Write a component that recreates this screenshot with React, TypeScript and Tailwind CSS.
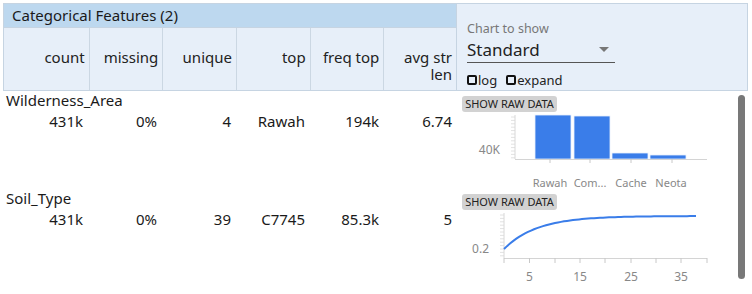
const columns = [
  { label: "count", width: "w-[85px]" },
  { label: "missing", width: "w-[74px]" },
  { label: "unique", width: "w-[74px]" },
  { label: "top", width: "w-[74px]" },
  { label: "freq top", width: "w-[74px]" },
  { label: "avg str len", width: "w-[73px]", wrap: true },
];

const rows = [
  { name: "Wilderness_Area", values: ["431k", "0%", "4", "Rawah", "194k", "6.74"] },
  { name: "Soil_Type", values: ["431k", "0%", "39", "C7745", "85.3k", "5"] },
];

const widths = ["w-[85px]", "w-[74px]", "w-[74px]", "w-[74px]", "w-[74px]", "w-[73px]"];

function RawButton() {
  return (
    <div className="ml-[5px] h-[16px] w-[95px] rounded-[3px] bg-[#d2d2d2] text-[11px] leading-[16px] text-[#222] text-center">
      SHOW RAW DATA
    </div>
  );
}

function YTicks({ x, from, to }: { x: number; from: number; to: number }) {
  const ticks = [];
  for (let y = from; y <= to; y += 3.4) ticks.push(y);
  return (
    <g stroke="#e2e2e2" strokeWidth="1">
      {ticks.map((y) => (
        <line key={y} x1={x - 4} x2={x} y1={y} y2={y} />
      ))}
    </g>
  );
}

function BarChart() {
  const bars = [
    { x: 78, top: 3, label: "Rawah", cx: 93 },
    { x: 117, top: 4, label: "Com...", cx: 133 },
    { x: 155, top: 41, label: "Cache", cx: 174 },
    { x: 193, top: 43, label: "Neota", cx: 214 },
  ];
  return (
    <svg width="280" height="80" viewBox="0 0 280 80">
      <YTicks x={58} from={5} to={46} />
      <line x1={58} x2={58} y1={3} y2={47} stroke="#d8d8d8" />
      {bars.map((b) => (
        <rect key={b.label} x={b.x} y={b.top} width={36} height={47 - b.top} fill="#3a7de9" stroke="#e9f1fd" strokeWidth="0.8" />
      ))}
      <line x1={58} x2={250} y1={47.5} y2={47.5} stroke="#d4d4d4" />
      {[93, 133, 174, 215].map((x) => (
        <line key={x} x1={x} x2={x} y1={47} y2={51} stroke="#c8c8c8" />
      ))}
      <g fontSize="11" fill="#888" textAnchor="middle" fontFamily="'Noto Sans', sans-serif">
        {bars.map((b) => (
          <text key={b.label} x={b.cx} y={75}>
            {b.label}
          </text>
        ))}
        <text x={43} y={42} textAnchor="end" fontSize="12">40K</text>
      </g>
    </svg>
  );
}

function LineChart() {
  const pts = [];
  for (let x = 47; x <= 240; x += 3) {
    const y = 6 + 33 * Math.exp(-(x - 47) / 33);
    pts.push(`${x},${y.toFixed(2)}`);
  }
  const ticks = [47, 72.5, 98, 123, 148, 174, 199, 224, 250];
  return (
    <svg width="280" height="80" viewBox="0 0 280 80">
      <YTicks x={47} from={5} to={47} />
      <line x1={47} x2={47} y1={3} y2={48} stroke="#d8d8d8" />
      <line x1={47} x2={250} y1={48.5} y2={48.5} stroke="#d4d4d4" />
      {ticks.map((x) => (
        <line key={x} x1={x} x2={x} y1={48} y2={53} stroke="#c8c8c8" />
      ))}
      <polyline points={pts.join(" ")} fill="none" stroke="#3a7de9" strokeWidth="2" />
      <g fontSize="12" fill="#888" textAnchor="middle" fontFamily="'Noto Sans', sans-serif">
        <text x={72.5} y={71}>5</text>
        <text x={123} y={71}>15</text>
        <text x={174} y={71}>25</text>
        <text x={224} y={71}>35</text>
        <text x={32} y={43} textAnchor="end">0.2</text>
      </g>
    </svg>
  );
}

function Checkbox({ label }: { label: string }) {
  return (
    <div className="flex items-center">
      <span className="w-[10px] h-[10px] border-2 border-[#111] rounded-[2px] mr-[1px]" />
      <span>{label}</span>
    </div>
  );
}

export default function App() {
  return (
    <div className="w-[752px] h-[294px] bg-white overflow-hidden text-[#1a1a1a] font-['Noto_Sans',sans-serif]">
      <div className="flex mt-[3px] ml-[3px] w-[745px]">
        <div className="w-[454px]">
          <div className="h-[25px] bg-[#bdd8ef] border border-[#c6d4e2] pl-[8px] text-[15px] leading-[23px]">
            Categorical Features (2)
          </div>
          <div className="flex h-[63px] bg-[#e7eff9] border-x border-b border-[#c6d4e2] text-[15px] leading-[17px] text-[#222]">
            {columns.map((c, i) => (
              <div
                key={c.label}
                className={`${c.width} ${i > 0 ? "border-l border-[#cbd7e3]" : ""} pt-[21px] pr-[4px] text-right`}
              >
                {c.wrap ? (
                  <>
                    avg str
                    <br />
                    len
                  </>
                ) : (
                  c.label
                )}
              </div>
            ))}
          </div>
        </div>
        <div className="flex-1 h-[88px] bg-[#e7eff9] border-r border-b border-t border-[#c6d4e2] pl-[10px] pt-[17px]">
          <div className="text-[12.5px] leading-[16px] text-[#777]">Chart to show</div>
          <div className="w-[148px] border-b border-[#555] flex items-center justify-between h-[26px]">
            <span className="text-[17px] leading-[24px] text-[#222]">Standard</span>
            <span className="mr-[6px] w-0 h-0 border-l-[5px] border-r-[5px] border-t-[5px] border-l-transparent border-r-transparent border-t-[#777]" />
          </div>
          <div className="flex gap-[9px] mt-[9px] text-[13px] leading-[16px] text-[#222]">
            <Checkbox label="log" />
            <Checkbox label="expand" />
          </div>
        </div>
      </div>
      <div className="flex">
        <div className="w-[457px]">
          {rows.map((r) => (
            <div key={r.name} className="h-[98px]">
              <div className="pl-[6px] text-[15px] leading-[18px]">{r.name}</div>
              <div className="flex text-[15px] leading-[24px]">
                {r.values.map((v, i) => (
                  <div key={i} className={`${widths[i]} text-right pr-[5px] ${i === 0 ? "ml-[3px]" : ""}`}>
                    {v}
                  </div>
                ))}
              </div>
            </div>
          ))}
        </div>
        <div className="w-[280px]">
          <div className="h-[98px] pt-[5px]">
            <RawButton />
            <BarChart />
          </div>
          <div className="h-[98px] pt-[5px]">
            <RawButton />
            <LineChart />
          </div>
        </div>
        <div className="pt-[4px] pl-[1px]">
          <div className="w-[7px] h-[184px] rounded-full bg-[#787878]" />
        </div>
      </div>
    </div>
  );
}
